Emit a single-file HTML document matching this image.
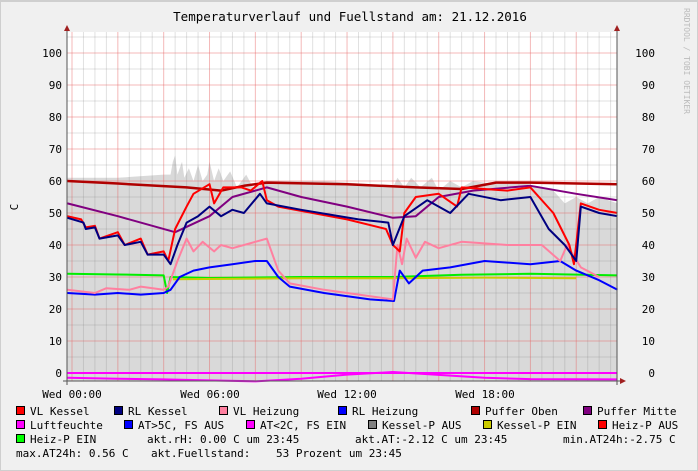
<!DOCTYPE html>
<html><head><meta charset="utf-8"><style>
html,body{margin:0;padding:0;background:#f0f0f0}
svg{display:block}
text{font-family:"DejaVu Sans Mono","Liberation Mono",monospace;font-size:11px;fill:#000}
</style></head><body>
<svg id="s" width="698" height="471" xmlns="http://www.w3.org/2000/svg">
<rect x="0" y="0" width="698" height="471" fill="#f0f0f0"/>
<rect x="0.5" y="0.5" width="697" height="470" fill="none" stroke="#cfcfcf"/>
<rect x="1" y="1" width="696" height="1" fill="#cfcfcf"/>
<rect x="67" y="32" width="550" height="349" fill="#ffffff"/>
<g id="area"></g><g id="grid"></g><g id="lines"></g>
<line x1="67" y1="28" x2="67" y2="385" stroke="#555"/>
<line x1="617" y1="28" x2="617" y2="385" stroke="#555"/>
<line x1="63" y1="381" x2="621" y2="381" stroke="#555"/>
<polygon points="64,31 70,31 67,25" fill="#a02020"/>
<polygon points="614,31 620,31 617,25" fill="#a02020"/>
<polygon points="620,378 620,384 626,381" fill="#a02020"/>
<text x="350" y="21" text-anchor="middle" style="font-size:12.5px">Temperaturverlauf und Fuellstand am: 21.12.2016</text>
<g text-anchor="end">
<text x="62" y="57">100</text><text x="62" y="89">90</text><text x="62" y="121">80</text><text x="62" y="153">70</text><text x="62" y="185">60</text><text x="62" y="217">50</text><text x="62" y="249">40</text><text x="62" y="281">30</text><text x="62" y="313">20</text><text x="62" y="345">10</text><text x="62" y="377">0</text>
<text x="655" y="57">100</text><text x="655" y="89">90</text><text x="655" y="121">80</text><text x="655" y="153">70</text><text x="655" y="185">60</text><text x="655" y="217">50</text><text x="655" y="249">40</text><text x="655" y="281">30</text><text x="655" y="313">20</text><text x="655" y="345">10</text><text x="655" y="377">0</text>
</g>
<text x="18" y="207" transform="rotate(-90 18 207)" text-anchor="middle">C</text>
<text x="684" y="8" transform="rotate(90 684 8)" style="font-size:8px;fill:#bbb">RRDTOOL / TOBI OETIKER</text>
<g text-anchor="middle">
<text x="72" y="398">Wed 00:00</text><text x="210" y="398">Wed 06:00</text><text x="347" y="398">Wed 12:00</text><text x="485" y="398">Wed 18:00</text>
</g>
<g id="leg"></g>
<text x="30" y="415">VL Kessel</text><text x="128" y="415">RL Kessel</text><text x="233" y="415">VL Heizung</text><text x="352" y="415">RL Heizung</text><text x="485" y="415">Puffer Oben</text><text x="597" y="415">Puffer Mitte</text>
<text x="30" y="429">Luftfeuchte</text><text x="138" y="429">AT&gt;5C, FS AUS</text><text x="260" y="429">AT&lt;2C, FS EIN</text><text x="382" y="429">Kessel-P AUS</text><text x="497" y="429">Kessel-P EIN</text><text x="612" y="429">Heiz-P AUS</text>
<text x="30" y="443">Heiz-P EIN</text><text x="147" y="443">akt.rH: 0.00 C um 23:45</text><text x="355" y="443">akt.AT:-2.12 C um 23:45</text><text x="563" y="443">min.AT24h:-2.75 C</text>
<text x="16" y="457">max.AT24h: 0.56 C</text><text x="151" y="457">akt.Fuellstand:</text><text x="276" y="457">53 Prozent um 23:45</text>
</svg>
<script>
var NS="http://www.w3.org/2000/svg";
function X(h){return 72+h*22.92}function Y(v){return 373-3.2*v}
function el(p,t,a){var e=document.createElementNS(NS,t);for(var k in a)e.setAttribute(k,a[k]);document.getElementById(p).appendChild(e);return e}
// grid
for(var h=-0.0;h<=23.8;h+=0.5){var x=X(h);if(x<67||x>617)continue;var maj=Math.abs(h/2-Math.round(h/2))<0.01;el("grid","line",{x1:x,x2:x,y1:32,y2:381,stroke:maj?"rgba(230,100,100,0.45)":"rgba(120,120,120,0.22)"})}
for(var v=0;v<=105;v+=5){var y=Y(v);el("grid","line",{x1:67,x2:617,y1:y,y2:y,stroke:v%10==0?"rgba(230,100,100,0.45)":"rgba(120,120,120,0.22)"})}
// area
var A=[[-0.2,61],[2,61],[4,62],[4.3,62],[4.4,66],[4.5,68],[4.6,62],[4.8,66],[4.9,61],[5.1,64],[5.3,60],[5.5,65],[5.7,60],[5.9,62],[6,66],[6.2,60],[6.4,64],[6.6,60],[6.9,63],[7.2,58],[7.6,62],[7.9,58],[8.2,60],[9,60],[11,60],[13,59],[14,58],[14.2,61],[14.5,58],[14.8,61],[15.2,58],[15.7,61],[16,57],[16.5,60],[17,58],[17.5,60],[18.5,59],[19.5,60],[20.3,58],[21,57],[21.5,53],[22,55],[22.5,53],[23,55],[23.8,53]];
var pts=X(-0.2)+","+Y(-2.5)+" "+A.map(function(p){return X(p[0])+","+Y(p[1])}).join(" ")+" "+X(23.8)+","+Y(-2.5);
el("area","polygon",{points:pts,fill:"#d9d9d9"});
function L(d,c,w){el("lines","polyline",{points:d.map(function(p){return X(p[0])+","+Y(p[1])}).join(" "),fill:"none",stroke:c,"stroke-width":w||2,"stroke-linejoin":"round"})}
L([[-0.2,0],[23.8,0]],"#ff00ff",2);
L([[-0.2,-1.5],[2,-1.8],[4,-2],[6,-2.3],[8,-2.6],[10,-1.8],[12,-0.5],[14,0.3],[16,-0.6],[18,-1.5],[20,-1.9],[23.8,-2]],"#ff00ff",2);
L([[-0.2,31],[2,30.8],[4,30.5],[4.15,25],[4.3,30],[6,29.7],[10,30],[14,30],[17,30.7],[20,31],[23.8,30.5]],"#00ee00",2);
L([[4.4,29.3],[10,29.6],[14,29.6],[18,29.8],[22,29.6]],"#cccc00",2);
L([[-0.2,25],[1,24.5],[2,25],[3,24.5],[4,25],[4.3,26],[4.7,30],[5.3,32],[6,33],[7,34],[8,35],[8.5,35],[9,30],[9.5,27],[11,25],[13,23],[14.05,22.5],[14.3,32],[14.7,28],[15.3,32],[16.5,33],[18,35],[20,34],[21.3,35],[22,32],[23,29],[23.8,26]],"#0000ff",2);
L([[-0.2,26],[1,25],[1.5,26.5],[2.5,26],[3,27],[4,26],[4.2,27],[4.6,35],[5,42],[5.3,38],[5.7,41],[6.2,38],[6.5,40],[7,39],[8,41],[8.5,42],[9,32],[9.5,28],[11,26],[14,23],[14.2,40],[14.4,34],[14.6,42],[15,36],[15.4,41],[16,39],[17,41],[19,40],[20.5,40],[21.3,35],[21.6,40],[22.2,33],[23,30]],"#ff80a0",2);
L([[-0.2,60],[2,59.2],[5,58],[6.5,57],[7.5,58.5],[8.5,59.5],[12,59],[15,58],[17,57.5],[18.5,59.5],[20,59.5],[23.8,59]],"#b00000",2.5);
L([[-0.2,53],[2,49],[4.5,44],[6,49],[7,55],[8.5,58],[10,55],[12,52],[14,48.5],[15,49],[16,55],[17.5,57],[20,58.5],[22,56],[23.8,54]],"#800080",2);
L([[-0.2,49],[0.4,48],[0.6,45.5],[1,46],[1.2,42],[2,44],[2.3,40],[3,42],[3.3,37],[4,38],[4.2,35],[4.5,45],[5,52],[5.3,56],[6,59],[6.2,53],[6.6,58],[7.4,58],[7.8,57],[8.3,60],[8.5,54],[9,52],[12,48],[13.7,45],[14,40],[14.3,38],[14.5,50],[15,55],[16,56],[16.8,52],[17,58],[19,57],[20,58],[21,50],[21.7,40],[21.9,34],[22.2,53],[23,51],[23.8,50]],"#ff0000",2);
L([[-0.2,48.5],[0.5,47],[0.6,45],[1,45.5],[1.2,42],[2,43],[2.3,40],[3,41],[3.3,37],[4,37],[4.3,34],[4.6,40],[5,47],[5.5,49],[6,52],[6.5,49],[7,51],[7.5,50],[8.2,56],[8.5,53],[10,51],[12.5,48],[13.8,47],[14,40],[14.5,49],[15.5,54],[16.5,50],[17.3,56],[18.7,54],[20,55],[20.8,45],[21.5,40],[22,35],[22.2,52],[23,50],[23.8,49]],"#000080",2);
// legend boxes
var lb=[[16,406,"#ff0000"],[114,406,"#000080"],[219,406,"#ff80a0"],[338,406,"#0000ff"],[471,406,"#b00000"],[583,406,"#800080"],[16,420,"#ff00ff"],[124,420,"#0000ff"],[246,420,"#ff00ff"],[368,420,"#808080"],[483,420,"#cccc00"],[598,420,"#ff0000"],[16,434,"#00ff00"]];
lb.forEach(function(b){el("leg","rect",{x:b[0]+0.5,y:b[1]+0.5,width:8,height:8,fill:b[2],stroke:"#000"})});
</script>
</body></html>
